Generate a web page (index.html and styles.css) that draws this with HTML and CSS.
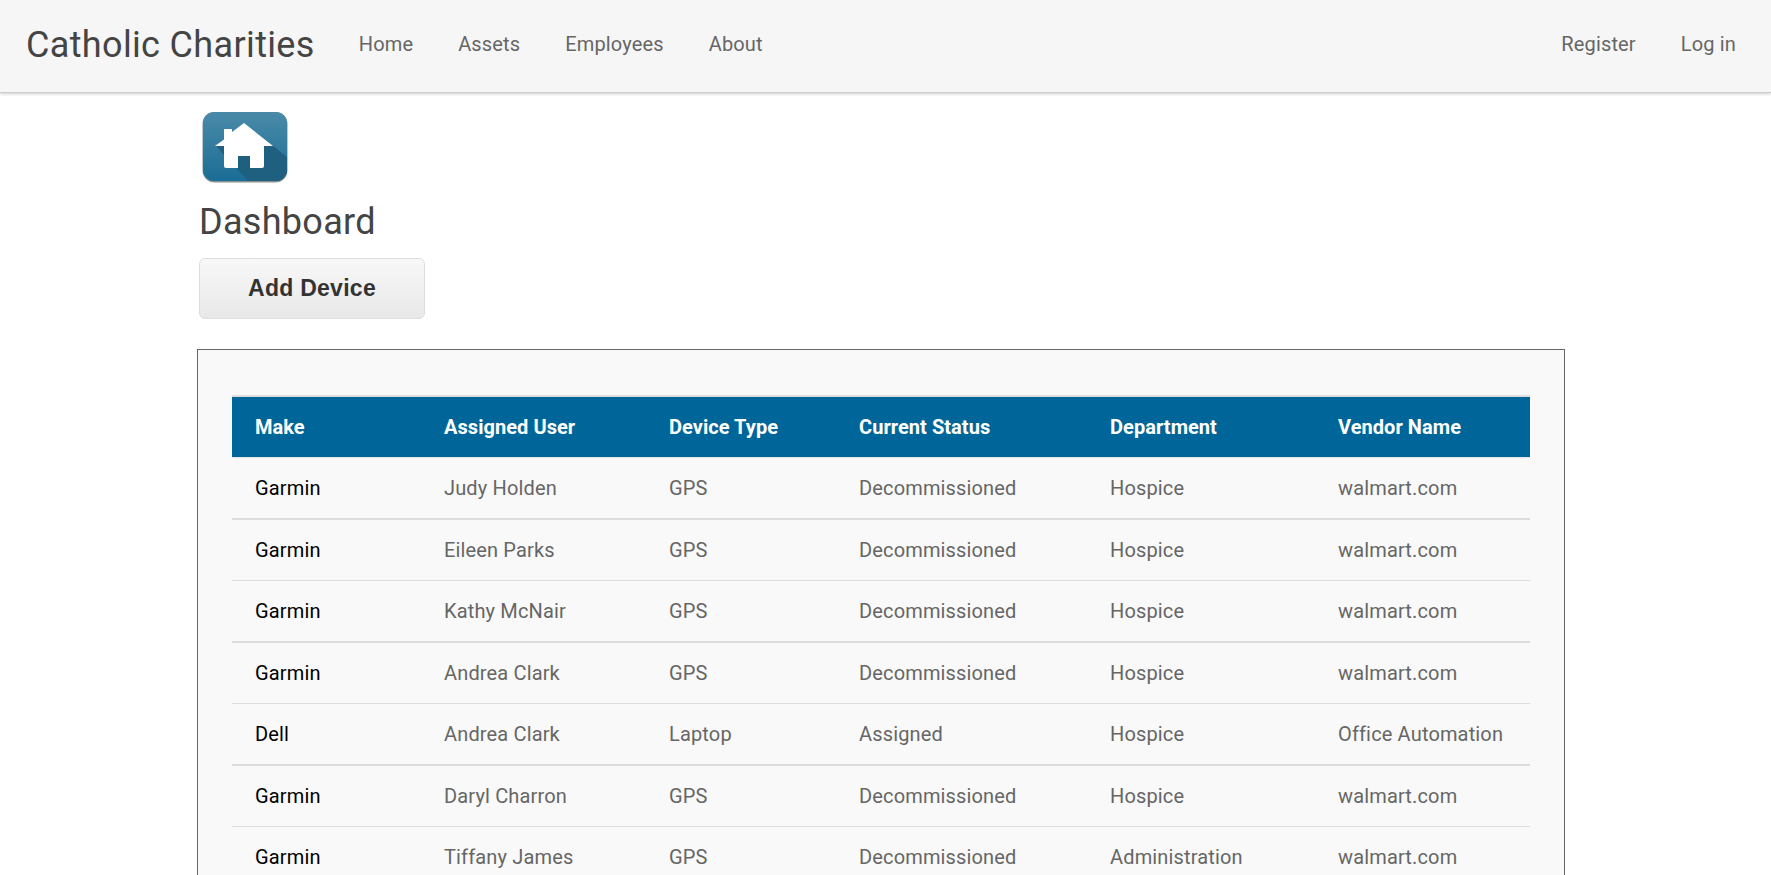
FILE: index.html
```html
<!DOCTYPE html>
<html lang="en">
<head>
    <meta charset="UTF-8">
    <meta name="viewport" content="width=device-width, initial-scale=1.0">
    <title>Dashboard - Catholic Charities</title>
    <link rel="stylesheet" href="styles.css">
</head>
<body>
    <nav class="navbar">
        <a class="brand" href="#">Catholic Charities</a>
        <ul class="nav-links">
            <li><a href="#">Home</a></li>
            <li><a href="#">Assets</a></li>
            <li><a href="#">Employees</a></li>
            <li><a href="#">About</a></li>
        </ul>
        <ul class="nav-links nav-right">
            <li><a href="#">Register</a></li>
            <li><a href="#">Log in</a></li>
        </ul>
    </nav>

    <main class="content">
        <svg class="home-icon" viewBox="0 0 86 72" width="86" height="72">
            <defs>
                <linearGradient id="tile" x1="0" y1="0" x2="0" y2="1">
                    <stop offset="0" stop-color="#4a8aa8"/>
                    <stop offset="1" stop-color="#1a6d96"/>
                </linearGradient>
                <clipPath id="tile-clip"><rect x="1" y="1" width="84" height="69" rx="11"/></clipPath>
            </defs>
            <rect x="0.5" y="1" width="85" height="70.5" rx="12" fill="#8a8f92"/>
            <rect x="1" y="1" width="84" height="69" rx="11" fill="url(#tile)"/>
            <path clip-path="url(#tile-clip)" d="M14 35 L47 71 L86 71 L86 47 L70 34 Z" fill="#1f5f80"/>
            <path d="M13 35 L22 28.5 L22 18 L30 18 L30 21 L42 12 L71 35 L62 35 L62 55 Q62 57 60 57 L48 57 L48 45 L36 45 L36 57 L24 57 Q22 57 22 55 L22 35 Z" fill="#fff"/>
        </svg>
        <h1 class="page-title">Dashboard</h1>
        <a class="btn" href="#">Add Device</a>

        <section class="panel">
            <table class="devices">
                <colgroup>
                    <col class="col-make">
                    <col class="col-user">
                    <col class="col-type">
                    <col class="col-status">
                    <col class="col-dept">
                    <col class="col-vendor">
                </colgroup>
                <thead>
                    <tr>
                        <th>Make</th>
                        <th>Assigned User</th>
                        <th>Device Type</th>
                        <th>Current Status</th>
                        <th>Department</th>
                        <th>Vendor Name</th>
                    </tr>
                </thead>
                <tbody>
                    <tr><td>Garmin</td><td>Judy Holden</td><td>GPS</td><td>Decommissioned</td><td>Hospice</td><td>walmart.com</td></tr>
                    <tr><td>Garmin</td><td>Eileen Parks</td><td>GPS</td><td>Decommissioned</td><td>Hospice</td><td>walmart.com</td></tr>
                    <tr><td>Garmin</td><td>Kathy McNair</td><td>GPS</td><td>Decommissioned</td><td>Hospice</td><td>walmart.com</td></tr>
                    <tr><td>Garmin</td><td>Andrea Clark</td><td>GPS</td><td>Decommissioned</td><td>Hospice</td><td>walmart.com</td></tr>
                    <tr><td>Dell</td><td>Andrea Clark</td><td>Laptop</td><td>Assigned</td><td>Hospice</td><td>Office Automation</td></tr>
                    <tr><td>Garmin</td><td>Daryl Charron</td><td>GPS</td><td>Decommissioned</td><td>Hospice</td><td>walmart.com</td></tr>
                    <tr><td>Garmin</td><td>Tiffany James</td><td>GPS</td><td>Decommissioned</td><td>Administration</td><td>walmart.com</td></tr>
                </tbody>
            </table>
        </section>
    </main>
</body>
</html>
```

FILE: styles.css
```css
html, body {
    height: 100%;
    overflow: hidden;
}

body {
    margin: 0;
    background-color: #fff;
    font-family: Roboto, "Liberation Sans", sans-serif;
    color: #444;
}

a {
    color: inherit;
    text-decoration: none;
}

.navbar {
    display: flex;
    align-items: center;
    box-sizing: border-box;
    height: 93px;
    padding: 0 35px 4px 26px;
    background-color: #f6f6f6;
    border-bottom: 1px solid #ccc;
    box-shadow: 0 1px 3px rgba(0, 0, 0, 0.2);
}

.brand {
    padding-top: 2px;
    font-size: 36px;
    letter-spacing: 0.35px;
    color: #444;
    margin-right: 23px;
}

.nav-links {
    display: flex;
    gap: 45px;
    list-style: none;
    margin: 0;
    padding: 0 0 0 21px;
    font-size: 20px;
    letter-spacing: 0.15px;
    color: #666;
}

.nav-right {
    margin-left: auto;
}

.content {
    padding: 18px 205px 0 199px;
}

.home-icon {
    display: block;
    margin-left: 3px;
}

.page-title {
    margin: 17px 0 14px;
    font-size: 36px;
    font-weight: 400;
    letter-spacing: 0.3px;
    line-height: 44px;
    color: #444;
}

.btn {
    display: block;
    box-sizing: border-box;
    width: 226px;
    height: 61px;
    line-height: 59px;
    text-align: center;
    font-family: "Liberation Sans", sans-serif;
    font-size: 23px;
    letter-spacing: 0.26px;
    font-weight: 700;
    color: #333;
    background: linear-gradient(#f8f8f8, #e8e8e8);
    border: 1px solid #ddd;
    border-radius: 6px;
}

.panel {
    box-sizing: border-box;
    width: 1368px;
    margin: 30px 0 0 -2px;
    padding: 45px 34px 0;
    background-color: #f9f9f9;
    border: 1px solid #666;
}

.devices {
    width: 1298px;
    border-collapse: separate;
    border-spacing: 0;
    table-layout: fixed;
    font-size: 20px;
    letter-spacing: 0.15px;
}

.col-make { width: 189px; }
.col-user { width: 225px; }
.col-type { width: 190px; }
.col-status { width: 251px; }
.col-dept { width: 228px; }
.col-vendor { width: 215px; }

.devices th {
    box-sizing: content-box;
    height: 60px;
    padding: 0 0 0 23px;
    text-align: left;
    font-weight: 700;
    letter-spacing: 0.05px;
    color: #fff;
    background-color: #006699;
    border-top: 2px solid #dedede;
    border-bottom: 1px solid #e4e4e4;
}

.devices td {
    box-sizing: content-box;
    height: 60px;
    padding: 0 0 0 23px;
    color: #666;
    border-bottom: 1px solid #ddd;
}

/* lines come out 2px, 1px, 2px... in the original */
.devices tbody tr:nth-child(odd) td {
    border-bottom-width: 2px;
}

.devices td:first-child {
    color: #000;
}
```
